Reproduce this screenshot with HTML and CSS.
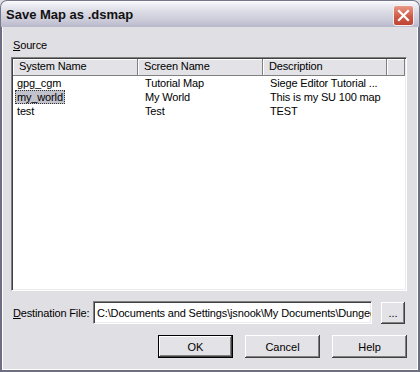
FILE: index.html
```html
<!DOCTYPE html>
<html lang="en">
<head>
    <meta charset="UTF-8">
    <title>Save Map as .dsmap</title>
    <link rel="stylesheet" href="styles.css">
</head>
<body>
    <div class="window">
        <div class="titlebar">
            <span class="title">Save Map as .dsmap</span>
            <button class="close-btn">
                <svg width="13" height="13" viewBox="0 0 13 13">
                    <path d="M2 2 L11 11 M11 2 L2 11" stroke="#fff" stroke-width="2.2" stroke-linecap="square"/>
                </svg>
            </button>
        </div>
        <div class="dialog">
            <div class="source-label"><u>S</u>ource</div>
            <div class="list">
                <div class="list-header">
                    <div class="col">System Name</div>
                    <div class="col">Screen Name</div>
                    <div class="col">Description</div>
                    <div class="col"></div>
                </div>
                <div class="row">
                    <div class="cell first"><span class="item">gpg_cgm</span></div>
                    <div class="cell">Tutorial Map</div>
                    <div class="cell">Siege Editor Tutorial ...</div>
                </div>
                <div class="row">
                    <div class="cell first"><span class="item selected">my_world</span></div>
                    <div class="cell">My World</div>
                    <div class="cell">This is my SU 100 map</div>
                </div>
                <div class="row">
                    <div class="cell first"><span class="item">test</span></div>
                    <div class="cell">Test</div>
                    <div class="cell">TEST</div>
                </div>
            </div>
            <div class="dest-row">
                <label class="dest-label"><u>D</u>estination File:</label>
                <input class="dest-input" type="text" value="C:\Documents and Settings\jsnook\My Documents\Dungeon Siege\Maps\my_world.dsmap">
                <button class="btn browse-btn">...</button>
            </div>
            <div class="buttons">
                <button class="btn default">OK</button>
                <button class="btn">Cancel</button>
                <button class="btn">Help</button>
            </div>
        </div>
    </div>
</body>
</html>
```

FILE: styles.css
```css
* {
    box-sizing: border-box;
}

body {
    margin: 0;
    font-family: "Liberation Sans", Arial, sans-serif;
    font-size: 11px;
    letter-spacing: -0.15px;
    color: #000;
    background-color: #e0dfe3;
}

.window {
    width: 420px;
    height: 372px;
    display: flex;
    flex-direction: column;
    background-color: #e0dfe3;
}

.titlebar {
    height: 27px;
    flex: none;
    display: flex;
    align-items: center;
    justify-content: space-between;
    padding: 0 5px 0 5px;
    border: 1px solid #77778c;
    border-bottom: none;
    border-radius: 7px 7px 0 0;
    background: linear-gradient(#fdfdff 0%, #eeeef4 12%, #dcdce6 40%, #cacad8 75%, #b8b8cc 100%);
}

.title {
    font-family: "Liberation Sans", Arial, sans-serif;
    font-size: 13px;
    font-weight: bold;
    letter-spacing: 0;
    color: #111;
}

.close-btn {
    width: 21px;
    height: 21px;
    padding: 0;
    margin-top: 2px;
    display: flex;
    align-items: center;
    justify-content: center;
    border: 1px solid #f4f0f0;
    border-radius: 3px;
    background: linear-gradient(#e99a88, #cf5a48 55%, #bd4433);
}

.dialog {
    flex: 1;
    display: flex;
    flex-direction: column;
    padding: 12px 11px 0 9px;
    border-left: 2px solid #6e6e82;
    border-right: 2px solid #6e6e82;
    border-bottom: 2px solid #6e6e82;
    box-shadow: inset 1px 0 #fff, inset -1px 0 #fff, inset 0 -1px #fff;
}

.source-label {
    margin-left: 2px;
    line-height: 13px;
}

.list {
    margin-top: 5px;
    height: 234px;
    background-color: #fff;
    border-top: 1px solid #808080;
    border-left: 1px solid #808080;
    border-right: 1px solid #fff;
    border-bottom: 1px solid #fff;
    box-shadow: inset 1px 1px #404040, inset -1px -1px #ecebef;
    padding: 1px;
}

.list-header {
    display: grid;
    grid-template-columns: 125px 125px 124px 1fr;
    height: 17px;
}

.col {
    padding-left: 6px;
    line-height: 15px;
    background-color: #e3e2e6;
    border-right: 1px solid #808080;
    border-bottom: 1px solid #808080;
    box-shadow: inset 1px 1px #fff;
    white-space: nowrap;
}

.row {
    display: grid;
    grid-template-columns: 125px 125px 124px 1fr;
    height: 14px;
    line-height: 14px;
}

.cell {
    padding-left: 7px;
    white-space: nowrap;
}

.cell.first {
    padding-left: 2px;
}

.item {
    display: inline-block;
    height: 14px;
    padding: 0 2px;
}

.item.selected {
    padding: 0 1px;
    line-height: 12px;
    background-color: #c2c2cc;
    border: 1px dotted #333;
}

.dest-row {
    margin-top: 10px;
    height: 23px;
    display: flex;
    align-items: center;
}

.dest-label {
    flex: none;
    width: 82px;
    padding-left: 2px;
    white-space: nowrap;
}

.dest-input {
    width: 279px;
    height: 23px;
    padding: 0 0 0 3px;
    font-family: "Liberation Sans", Arial, sans-serif;
    font-size: 11px;
    letter-spacing: -0.15px;
    color: #000;
    background-color: #fff;
    border-top: 1px solid #808080;
    border-left: 1px solid #808080;
    border-right: 1px solid #fff;
    border-bottom: 1px solid #fff;
    box-shadow: inset 1px 1px #404040, inset -1px -1px #ecebef;
    outline: none;
}

.btn {
    width: 75px;
    height: 23px;
    padding: 0;
    font-family: "Liberation Sans", Arial, sans-serif;
    font-size: 11px;
    color: #000;
    background-color: #e3e2e6;
    border: none;
    box-shadow: inset -1px -1px #404040, inset 1px 1px #fff, inset -2px -2px #808080;
}

.browse-btn {
    width: 24px;
    height: 22px;
    margin-left: 9px;
}

.btn.default {
    border: 1px solid #000;
}

.buttons {
    margin-top: 11px;
    display: flex;
    justify-content: flex-end;
    gap: 12px;
}
```
